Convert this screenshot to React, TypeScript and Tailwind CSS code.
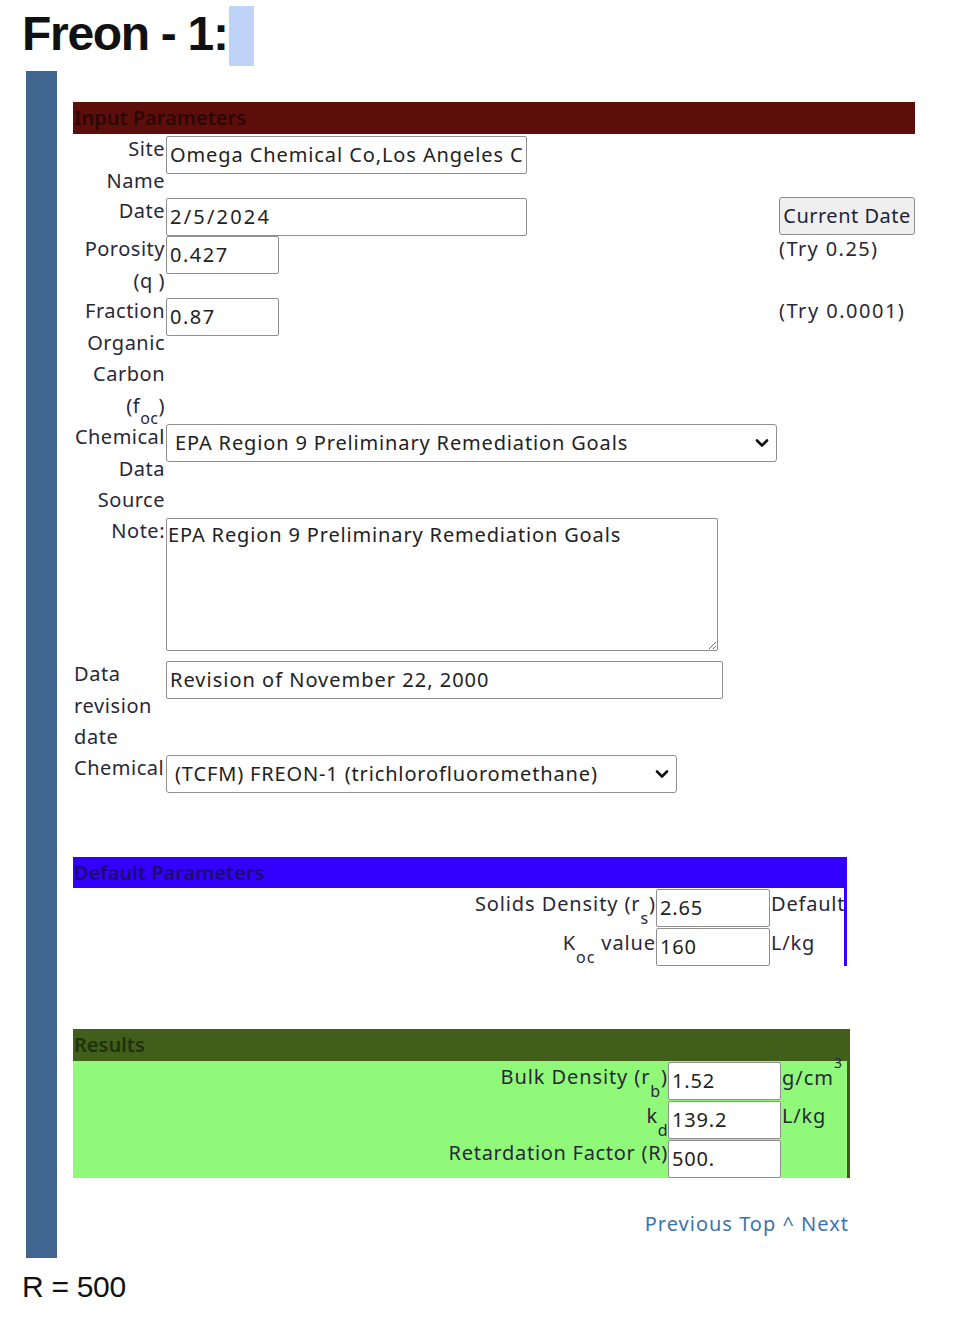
import React from "react";

const F = { fontFamily: '"Noto Sans", "Open Sans", sans-serif' } as const;

function Chevron() {
  return (
    <svg width="16" height="16" viewBox="0 0 16 16" className="shrink-0">
      <path d="M3 5.5l5 5 5-5" fill="none" stroke="#111" strokeWidth="2.6" strokeLinecap="round" strokeLinejoin="round" />
    </svg>
  );
}

function Input({ value, w, cls = "" }: { value: string; w: string; cls?: string }) {
  return (
    <div className={`${w} h-[38px] shrink-0 border border-[#8f8f8f] rounded-[2px] bg-white text-[#222] flex items-center pl-[3px] overflow-hidden whitespace-nowrap ${cls}`}>
      {value}
    </div>
  );
}

function Select({ value, w }: { value: string; w: string }) {
  return (
    <div className={`${w} h-[38px] border border-[#8f8f8f] rounded-[3px] bg-white text-[#222] flex items-center justify-between pl-[8px] pr-[6px] whitespace-nowrap tracking-[0.85px]`}>
      <span>{value}</span>
      <Chevron />
    </div>
  );
}

function Sub({ children, top = "top-[13px]" }: { children: React.ReactNode; top?: string }) {
  return <span className={`relative ${top} text-[16px] leading-none`}>{children}</span>;
}

export default function App() {
  return (
    <div className="bg-white min-h-[1318px] pl-[22px] text-[20px] leading-[31.5px] text-[#282838] tracking-[0.5px]" style={F}>
      {/* Title */}
      <div className="flex items-start pt-[6px]">
        <span
          className="text-[48px] leading-[55px] font-bold tracking-[-1.3px] text-[#111]"
          style={{ fontFamily: '"Liberation Sans", Arial, sans-serif' }}
        >
          Freon - 1:
        </span>
        <span className="block w-[25px] h-[60px] bg-[#bfd3f8] ml-px" />
      </div>

      {/* Main area with left bar */}
      <div className="flex mt-[5px] ml-[4px]">
        <div className="w-[31px] bg-[#40658f] shrink-0" />
        <div className="ml-[16px] pt-[31px] pb-[18px]">
          {/* Input Parameters */}
          <div className="w-[842px] h-[32px] bg-[#5c0e0b] text-[#2c0706] font-semibold leading-[32px] pl-px tracking-normal">
            Input Parameters
          </div>
          <div className="w-[842px] flex flex-col mt-[2px]">
            {/* Site Name */}
            <div className="flex h-[62px]">
              <div className="w-[92px] text-right relative -top-[3px]">Site<br />Name</div>
              <div className="w-[614px] pl-px">
                <Input value="Omega Chemical Co,Los Angeles C" w="w-[361px]" cls="tracking-[0.9px]" />
              </div>
            </div>
            {/* Date */}
            <div className="flex h-[38px]">
              <div className="w-[92px] text-right relative -top-[3px]">Date</div>
              <div className="w-[614px] pl-px">
                <Input value="2/5/2024" w="w-[361px]" cls="tracking-[2.2px]" />
              </div>
              <div className="flex-1 -mt-px">
                <div className="w-[136px] h-[38px] bg-[#efefef] border border-[#8d8d8d] rounded-[3px] text-[#1f1f3a] flex items-center justify-center whitespace-nowrap tracking-[0.5px]">
                  Current Date
                </div>
              </div>
            </div>
            {/* Porosity */}
            <div className="flex h-[62px]">
              <div className="w-[92px] text-right relative -top-[3px]">Porosity<br />(q )</div>
              <div className="w-[614px] pl-px">
                <Input value="0.427" w="w-[113px]" cls="tracking-[1.5px]" />
              </div>
              <div className="flex-1 relative -top-[3px] tracking-[1.4px]">(Try 0.25)</div>
            </div>
            {/* Fraction Organic Carbon */}
            <div className="flex h-[126px]">
              <div className="w-[92px] text-right relative -top-[3px]">
                Fraction<br />Organic<br />Carbon<br />(f<Sub top="top-[11px]">oc</Sub>)
              </div>
              <div className="w-[614px] pl-px">
                <Input value="0.87" w="w-[113px]" cls="tracking-[1.5px]" />
              </div>
              <div className="flex-1 relative -top-[3px] tracking-[1.5px]">(Try 0.0001)</div>
            </div>
            {/* Chemical Data Source */}
            <div className="flex h-[94px]">
              <div className="w-[92px] text-right relative -top-[3px] whitespace-nowrap">Chemical<br />Data<br />Source</div>
              <div className="w-[614px] pl-px">
                <Select value="EPA Region 9 Preliminary Remediation Goals" w="w-[611px]" />
              </div>
            </div>
            {/* Note */}
            <div className="flex h-[143px]">
              <div className="w-[92px] text-right relative -top-[3px]">Note:</div>
              <div className="w-[614px] pl-px">
                <textarea
                  readOnly
                  defaultValue="EPA Region 9 Preliminary Remediation Goals"
                  className="block w-[552px] h-[133px] border border-[#8f8f8f] rounded-[2px] bg-white text-[#222] px-[1px] py-0 leading-[31.5px] outline-none tracking-[0.85px] resize"
                  style={F}
                />
              </div>
            </div>
            {/* Data revision date */}
            <div className="flex h-[94px]">
              <div className="w-[92px] text-left pl-px relative -top-[3px] tracking-[0.6px]">Data<br />revision<br />date</div>
              <div className="w-[614px] pl-px">
                <Input value="Revision of November 22, 2000" w="w-[557px]" cls="tracking-[1px]" />
              </div>
            </div>
            {/* Chemical */}
            <div className="flex h-[38px]">
              <div className="w-[92px] text-left pl-px relative -top-[3px] whitespace-nowrap">Chemical</div>
              <div className="w-[614px] pl-px">
                <Select value="(TCFM) FREON-1 (trichlorofluoromethane)" w="w-[511px]" />
              </div>
            </div>
          </div>

          {/* Default Parameters */}
          <div className="mt-[64px] w-[774px]">
            <div className="h-[31px] bg-[#3300ff] text-[#1d0c6e] font-semibold leading-[31px] pl-px tracking-normal">
              Default Parameters
            </div>
            <div className="border-r-[3px] border-[#3300ff] pt-px flex flex-col gap-px">
              <div className="flex justify-end h-[38px]">
                <div className="relative -top-[1px] whitespace-nowrap tracking-[0.9px]">Solids Density (r<Sub>s</Sub>)</div>
                <Input value="2.65" w="w-[114px]" cls="tracking-[0.8px]" />
                <div className="w-[74px] relative -top-[1px] pl-px tracking-[0.8px]">Default</div>
              </div>
              <div className="flex justify-end h-[38px]">
                <div className="relative -top-[1px] whitespace-nowrap tracking-[0.9px]">K<Sub>oc</Sub> value</div>
                <Input value="160" w="w-[114px]" cls="tracking-[0.8px]" />
                <div className="w-[74px] relative -top-[1px] pl-px tracking-[0.8px]">L/kg</div>
              </div>
            </div>
          </div>

          {/* Results */}
          <div className="mt-[63px] w-[777px]">
            <div className="h-[32px] bg-[#415f1b] text-[#1f320b] font-semibold leading-[32px] pl-px tracking-normal">
              Results
            </div>
            <div className="bg-[#91f97a] border-r-[3px] border-[#3e5e19] pt-px flex flex-col gap-px">
              <div className="flex justify-end h-[38px]">
                <div className="relative -top-[1px] whitespace-nowrap tracking-[0.9px]">Bulk Density (r<Sub>b</Sub>)</div>
                <Input value="1.52" w="w-[113px]" cls="tracking-[0.8px]" />
                <div className="w-[66px] relative top-[0px] pl-px whitespace-nowrap tracking-[1px]">
                  g/cm<span className="relative -top-[17px] text-[14px] leading-none">3</span>
                </div>
              </div>
              <div className="flex justify-end h-[38px]">
                <div className="relative -top-[1px] whitespace-nowrap">k<Sub>d</Sub></div>
                <Input value="139.2" w="w-[113px]" cls="tracking-[0.8px]" />
                <div className="w-[66px] relative -top-[1px] pl-px tracking-[0.8px]">L/kg</div>
              </div>
              <div className="flex justify-end h-[38px]">
                <div className="relative -top-[3px] whitespace-nowrap tracking-[0.7px]">Retardation Factor (R)</div>
                <Input value="500." w="w-[113px]" cls="tracking-[0.8px]" />
                <div className="w-[66px]" />
              </div>
            </div>
          </div>

          {/* Nav */}
          <div className="mt-[30px] w-[776px] text-right text-[#3b74ad] tracking-[1px]">
            <span>Previous</span> <span>Top ^</span> <span>Next</span>
          </div>
        </div>
      </div>

      {/* Bottom */}
      <div
        className="mt-[12px] text-[30px] leading-[34px] text-[#111] tracking-[-0.3px]"
        style={{ fontFamily: '"Liberation Sans", Arial, sans-serif' }}
      >
        R = 500
      </div>
    </div>
  );
}
